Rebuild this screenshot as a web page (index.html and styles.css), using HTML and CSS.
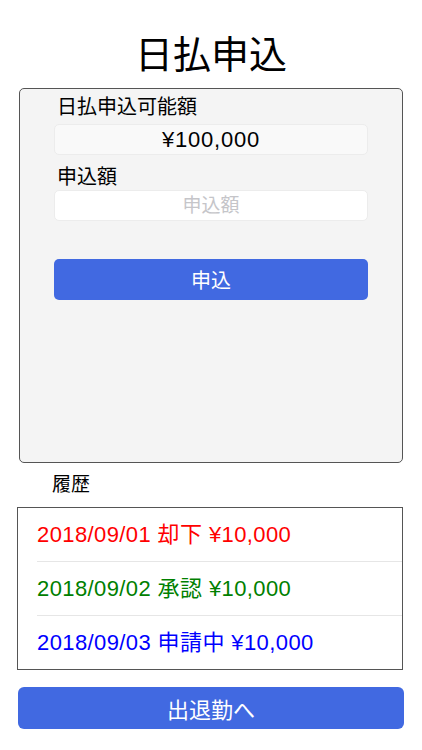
FILE: index.html
```html
<!DOCTYPE html>
<html lang="ja">
<head>
    <meta charset="UTF-8">
    <meta name="viewport" content="width=device-width, initial-scale=1.0">
    <title>日払申込</title>
    <link rel="stylesheet" href="styles.css">
</head>
<body>
    <h1 class="title">日払申込</h1>

    <form class="panel" id="applyForm">
        <label class="field-label">日払申込可能額</label>
        <div class="field field-value">¥100,000</div>
        <label class="field-label field-label-second" for="amount">申込額</label>
        <input class="field field-input" type="text" id="amount" name="amount" placeholder="申込額">
        <button class="btn btn-apply" type="submit">申込</button>
    </form>

    <div class="history-label">履歴</div>
    <ul class="history">
        <li class="history-row rejected">2018/09/01 却下 ¥10,000</li>
        <li class="history-row approved">2018/09/02 承認 ¥10,000</li>
        <li class="history-row pending">2018/09/03 申請中 ¥10,000</li>
    </ul>

    <button class="btn btn-attendance" type="button">出退勤へ</button>
</body>
</html>
```

FILE: styles.css
```css
body {
    margin: 0;
    font-family: "Liberation Sans", "Noto Sans CJK JP", sans-serif;
    color: #000;
    background-color: #fff;
}
.title {
    margin: 0;
    padding-top: 30px;
    height: 58px;
    line-height: 44px;
    font-family: "Noto Sans CJK JP", sans-serif;
    font-size: 38px;
    font-weight: normal;
    text-align: center;
}
.panel {
    display: flex;
    flex-direction: column;
    box-sizing: border-box;
    margin: 0 19px;
    height: 375px;
    padding: 4px 34px 0;
    background-color: #f4f4f4;
    border: 1px solid #555;
    border-radius: 5px;
}
.field-label {
    display: block;
    padding-left: 3px;
    line-height: 28px;
    font-size: 20px;
}
.field-label-second {
    margin-top: 10px;
    line-height: 24px;
}
.field {
    box-sizing: border-box;
    width: 100%;
    height: 31px;
    border: 1px solid #ececec;
    border-radius: 5px;
    font-family: "Liberation Sans", "Noto Sans CJK JP", sans-serif;
    text-align: center;
}
.field-value {
    margin-top: 3px;
    background-color: #f9f9f9;
    line-height: 29px;
    font-size: 22px;
    letter-spacing: 0.8px;
}
.field-input {
    margin: 1px 0 0;
    padding: 0;
    background-color: #fff;
    font-size: 19px;
    outline: none;
}
.field-input::placeholder {
    color: #c5c5c9;
}
.btn {
    display: block;
    box-sizing: border-box;
    border: none;
    background-color: #4169e1;
    color: #fff;
    font-family: "Liberation Sans", "Noto Sans CJK JP", sans-serif;
    cursor: pointer;
}
.btn-apply {
    margin-top: 38px;
    width: 100%;
    height: 41px;
    border-radius: 5px;
    font-size: 20px;
}
.history-label {
    margin: 10px 0 10px;
    padding-left: 52px;
    line-height: 24px;
    font-size: 19px;
}
.history {
    margin: 0 19px 0 17px;
    padding: 0;
    list-style: none;
    border: 1px solid #555;
}
.history-row {
    margin-left: 19px;
    height: 53px;
    line-height: 53px;
    font-size: 22px;
    letter-spacing: 0.4px;
    border-bottom: 1px solid #e6e6e6;
}
.history-row:last-child {
    border-bottom: none;
}
.rejected {
    color: red;
}
.approved {
    color: green;
}
.pending {
    color: blue;
}
.btn-attendance {
    margin: 17px 0 0 18px;
    width: 386px;
    height: 42px;
    border-radius: 6px;
    font-size: 22px;
}
```
